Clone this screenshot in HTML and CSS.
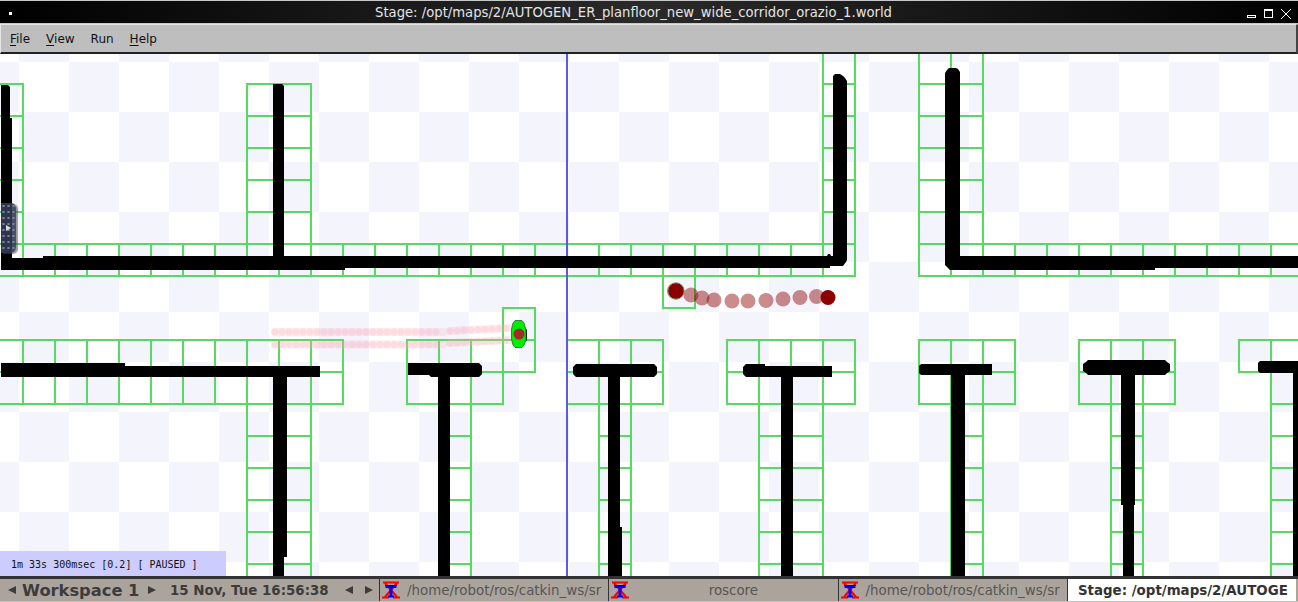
FILE: index.html
```html
<!DOCTYPE html>
<html lang="en">
<head>
  <meta charset="UTF-8" />
  <title>Stage</title>
  <link rel="stylesheet" href="styles.css">
</head>
<body>
  <svg class="defs" width="0" height="0">
    <defs>
      <pattern id="checker" patternUnits="userSpaceOnUse" x="19" y="62" width="100" height="100">
        <rect x="50" y="0" width="50" height="50" fill="#f4f4fd" />
        <rect x="0" y="50" width="50" height="50" fill="#f4f4fd" />
      </pattern>
      <pattern id="cost" patternUnits="userSpaceOnUse" x="22" y="19" width="32" height="32">
        <rect width="32" height="2" fill="#58d962" shape-rendering="crispEdges" />
        <rect width="2" height="32" fill="#58d962" shape-rendering="crispEdges" />
      </pattern>
      <symbol id="xterm" viewBox="0 0 18 18">
        <g fill="none" stroke="#f00">
          <path d="M1 1.500H17M0 16.500H7M11 16.500H18" stroke-width="2" />
          <path d="M3 2L15 16M15 2L3 16" stroke-width="2.200" />
        </g>
        <path d="M3 4.500H15" fill="none" stroke="#000" stroke-width="1" />
        <path d="M3.500 6H14.500M9 5V15M6 15.500H12" fill="none" stroke="#00f" stroke-width="2" />
        <path d="M9 6V15" fill="none" stroke="#00f" stroke-width="3" />
      </symbol>
    </defs>
  </svg>

  <div class="window">
    <div class="titlebar">
      <span class="window-menu"></span>
      <div class="title">Stage: /opt/maps/2/AUTOGEN_ER_planfloor_new_wide_corridor_orazio_1.world</div>
      <div class="controls">
        <span class="btn-min"></span>
        <span class="btn-max"></span>
        <svg class="btn-close" width="10" height="10" viewBox="0 0 10 10"><path d="M0 0l10 10M10 0L0 10" stroke="#fff" stroke-width="1" /></svg>
      </div>
    </div>

    <div class="menubar">
      <span class="menu-item"><u>F</u>ile</span>
      <span class="menu-item"><u>V</u>iew</span>
      <span class="menu-item">Run</span>
      <span class="menu-item"><u>H</u>elp</span>
    </div>

    <div class="stage">
      <svg class="map" width="1298" height="522" viewBox="0 54 1298 522">
        <rect x="0" y="54" width="1298" height="522" fill="#fff" />
        <rect x="0" y="54" width="1298" height="522" fill="url(#checker)" />

        <!-- costmap cells -->
        <g fill="url(#cost)">
          <rect x="0" y="83" width="24" height="194" />
          <rect x="246" y="83" width="66" height="194" />
          <rect x="22" y="243" width="834" height="34" />
          <rect x="822" y="54" width="34" height="223" />
          <rect x="918" y="54" width="66" height="223" />
          <rect x="918" y="243" width="380" height="34" />
          <rect x="662" y="275" width="34" height="34" />
          <rect x="502" y="307" width="34" height="66" />
          <rect x="0" y="339" width="344" height="66" />
          <rect x="246" y="403" width="66" height="173" />
          <rect x="406" y="339" width="98" height="66" />
          <rect x="438" y="403" width="34" height="173" />
          <rect x="566" y="339" width="98" height="66" />
          <rect x="598" y="403" width="34" height="173" />
          <rect x="726" y="339" width="130" height="66" />
          <rect x="758" y="403" width="66" height="173" />
          <rect x="918" y="339" width="98" height="66" />
          <rect x="950" y="403" width="34" height="173" />
          <rect x="1078" y="339" width="98" height="66" />
          <rect x="1110" y="403" width="34" height="173" />
          <rect x="1238" y="339" width="34" height="34" />
          <rect x="1270" y="339" width="28" height="66" />
          <rect x="1270" y="403" width="28" height="173" />
        </g>
        <path d="M12 258.500H43" stroke="#58d962" stroke-width="1" />

        <line x1="567" y1="54" x2="567" y2="576" stroke="#5a5ae6" stroke-width="2" />

        <!-- walls -->
        <g fill="#000">
          <path d="M1 85H8L10 87V118H12V258H43V256H827L828 254H830L831 256H833V76L835 74H840L843 76L845 78L847 81V260L846 262L843 266H830V268H345V270H1Z" />
          <path d="M273 84H282L284 86V257H273Z" />
          <path d="M945 73L947 70L949 68H956L958 69L960 72V256H1298V268H1155V270H950L947 267L945 265Z" />
          <path d="M1 363H125V366H320V377H287V557H284V576H273V377H1Z" />
          <path d="M408 363H479L482 366V374L479 377H450V576H438V377H431L429 375H408Z" />
          <path d="M576 364H654L657 367V374L654 377H620V527H622V576H608V377H576L573 374V367Z" />
          <path d="M746 364H765V366H832V377H793V576H781V377H746L743 374V367Z" />
          <path d="M921 364H992V375H965V576H951V375H921L919 373V366Z" />
          <path d="M1088 360H1165L1167 362L1170 364V371L1167 373L1165 375H1135V505H1134V576H1123V505H1121V375H1088L1086 373L1083 371V364L1086 362Z" />
          <path d="M1260 361H1298V373H1260L1258 371V363Z" />
          <rect x="1293" y="373" width="5" height="203" />
        </g>

        <!-- laser trail of the green robot -->
        <g fill="none" stroke-linecap="round">
          <path class="trail" d="M275 332H443M450 331L512 328M275 344.500H443M450 343L512 340" />
          <path class="trail-dots" d="M275 332H443M450 331L512 328M275 344.500H443M450 343L512 340" />
        </g>

        <!-- green robot -->
        <path d="M525 328L527 330V340L525 342Z" fill="#000" />
        <path d="M515 320.500H522L524 323L526 330V340L524 345L522 347.500H515L513 345L511.500 339V329L513 323Z" fill="#00ee00" stroke="#1a6a3a" stroke-width="0.800" />
        <circle cx="519" cy="334" r="5.500" fill="#a52a2a" />

        <!-- red robot path -->
        <g fill="#8b0000" fill-opacity="0.45">
          <circle cx="691" cy="295" r="7.500" />
          <circle cx="702" cy="298" r="7.500" />
          <circle cx="714" cy="300" r="7.500" />
          <circle cx="732" cy="301" r="7.500" />
          <circle cx="748" cy="301" r="7.500" />
          <circle cx="766" cy="300.500" r="7.500" />
          <circle cx="783" cy="299" r="7.500" />
          <circle cx="800" cy="297.500" r="7.500" />
          <circle cx="816.500" cy="296.500" r="7.500" />
        </g>
        <circle cx="828" cy="297.500" r="7.500" fill="#8b0000" />
        <circle cx="675" cy="291" r="8" fill="#e8a000" />
        <circle cx="676" cy="291" r="8.200" fill="#8b0000" stroke="#6fa06f" stroke-width="1" />
      </svg>

      <div class="handle">
        <span class="handle-arrow"></span>
      </div>

      <div class="status">1m 33s 300msec [0.2] [ PAUSED ]</div>
    </div>

    <div class="taskbar">
      <div class="pager">
        <span class="arrow-left"></span>
        <span class="workspace">Workspace 1</span>
        <span class="arrow-right"></span>
      </div>
      <div class="clock">15 Nov, Tue 16:56:38</div>
      <div class="task-nav">
        <span class="arrow-left"></span>
        <span class="arrow-right"></span>
      </div>
      <div class="tasks">
        <div class="task">
          <svg class="task-icon" width="18" height="18"><use href="#xterm" /></svg>
          <span class="task-name">/home/robot/ros/catkin_ws/sr</span>
        </div>
        <div class="task">
          <svg class="task-icon" width="18" height="18"><use href="#xterm" /></svg>
          <span class="task-name">roscore</span>
        </div>
        <div class="task">
          <svg class="task-icon" width="18" height="18"><use href="#xterm" /></svg>
          <span class="task-name">/home/robot/ros/catkin_ws/sr</span>
        </div>
        <div class="task active">
          <span class="task-name">Stage: /opt/maps/2/AUTOGE</span>
        </div>
      </div>
    </div>
  </div>
</body>
</html>
```

FILE: styles.css
```css
body {
  margin: 0;
  background: #c8c8c8;
  font-family: "DejaVu Sans", sans-serif;
  overflow: hidden;
}

.defs {
  display: block;
  height: 0;
}

.window {
  width: 1298px;
  height: 602px;
  display: flex;
  flex-direction: column;
  overflow: hidden;
}

/* title bar */
.titlebar {
  height: 22px;
  margin-top: 1px;
  flex: none;
  display: flex;
  align-items: center;
  padding: 0 7px 0 9px;
  background: linear-gradient(to right, #000, #2a2a2a 50%, #000);
  color: #e4e4e4;
}

.window-menu {
  width: 3px;
  height: 3px;
  margin-top: 3px;
  background: #fff;
}

.title {
  flex: 1;
  text-align: center;
  font-size: 13.2px;
  padding-left: 8px;
  white-space: nowrap;
}

.controls {
  display: flex;
  align-items: center;
  gap: 8px;
  margin-top: 3px;
}

.btn-min {
  width: 7px;
  height: 1px;
  margin-top: 5px;
  border: 1px solid #fff;
}

.btn-max {
  width: 7px;
  height: 6px;
  border: 1px solid #fff;
  border-top-width: 2px;
}

/* menu bar */
.menubar {
  height: 30px;
  flex: none;
  box-sizing: border-box;
  display: flex;
  align-items: center;
  gap: 16px;
  padding-left: 9px;
  background: #bebebe;
  border-top: 1px solid #e6e6e6;
  border-left: 1px solid #e6e6e6;
  border-right: 2px solid #444;
  border-bottom: 2px solid #222;
  margin-top: 1px;
  font-size: 12px;
  color: #111;
}

.menu-item u {
  text-underline-offset: 2px;
}

/* map */
.stage {
  position: relative;
  height: 522px;
  flex: none;
}

.map {
  display: block;
}

.trail {
  stroke: rgba(250, 170, 180, 0.22);
  stroke-width: 8px;
}

.trail-dots {
  stroke: rgba(250, 160, 175, 0.22);
  stroke-width: 7px;
  stroke-dasharray: 0 7;
}

.handle {
  position: absolute;
  left: 1px;
  top: 149px;
  width: 15px;
  height: 50px;
  display: flex;
  align-items: center;
  justify-content: center;
  border-radius: 0 5px 5px 0;
  background-color: rgba(50, 60, 85, 0.9);
  background-image: radial-gradient(#7c8498 1px, transparent 1.2px);
  background-size: 5px 6px;
  box-shadow: 2px 1px 1px rgba(70, 70, 80, 0.55);
}

.handle-arrow {
  width: 0;
  height: 0;
  border-left: 5px solid #ddd;
  border-top: 3px solid transparent;
  border-bottom: 3px solid transparent;
}

.status {
  position: absolute;
  left: 0;
  bottom: 0;
  width: 215px;
  height: 25px;
  padding-left: 11px;
  background: #ccccff;
  font-family: "DejaVu Sans Mono", monospace;
  font-size: 10px;
  line-height: 27px;
  color: #111;
  white-space: nowrap;
}

/* task bar */
.taskbar {
  height: 26px;
  flex: none;
  box-sizing: border-box;
  display: flex;
  align-items: stretch;
  background: #aba49c;
  border-top: 3px solid #333;
  border-bottom: 1px solid #c4c0ba;
  color: #3c3c3c;
}

.pager {
  display: flex;
  align-items: center;
  padding-left: 8px;
}

.workspace {
  width: 118px;
  margin: 0 8px 0 6px;
  font-size: 16.3px;
  font-weight: bold;
  white-space: nowrap;
}

.clock {
  display: flex;
  align-items: center;
  width: 158px;
  margin-left: 14px;
  padding-right: 1px;
  font-size: 13.4px;
  font-weight: bold;
  white-space: nowrap;
}

.task-nav {
  display: flex;
  align-items: center;
  gap: 12px;
  margin-left: 16px;
  padding-right: 6px;
}

.arrow-left,
.arrow-right {
  width: 0;
  height: 0;
  border-top: 4px solid transparent;
  border-bottom: 4px solid transparent;
}

.arrow-left {
  border-right: 8px solid #3c3c3c;
}

.arrow-right {
  border-left: 8px solid #3c3c3c;
}

.tasks {
  flex: 1;
  display: grid;
  grid-template-columns: repeat(4, 1fr);
  margin-right: 2px;
}

.task {
  display: flex;
  align-items: center;
  min-width: 0;
  overflow: hidden;
  box-sizing: border-box;
  border-left: 1px solid #333;
  padding-left: 2px;
  font-size: 13.4px;
  color: #555;
}

.task-icon {
  flex: none;
}

.task-name {
  flex: 1;
  min-width: 0;
  text-align: center;
  white-space: nowrap;
  overflow: hidden;
}

.task.active {
  background: #fff;
  color: #333;
  font-weight: bold;
}
```
